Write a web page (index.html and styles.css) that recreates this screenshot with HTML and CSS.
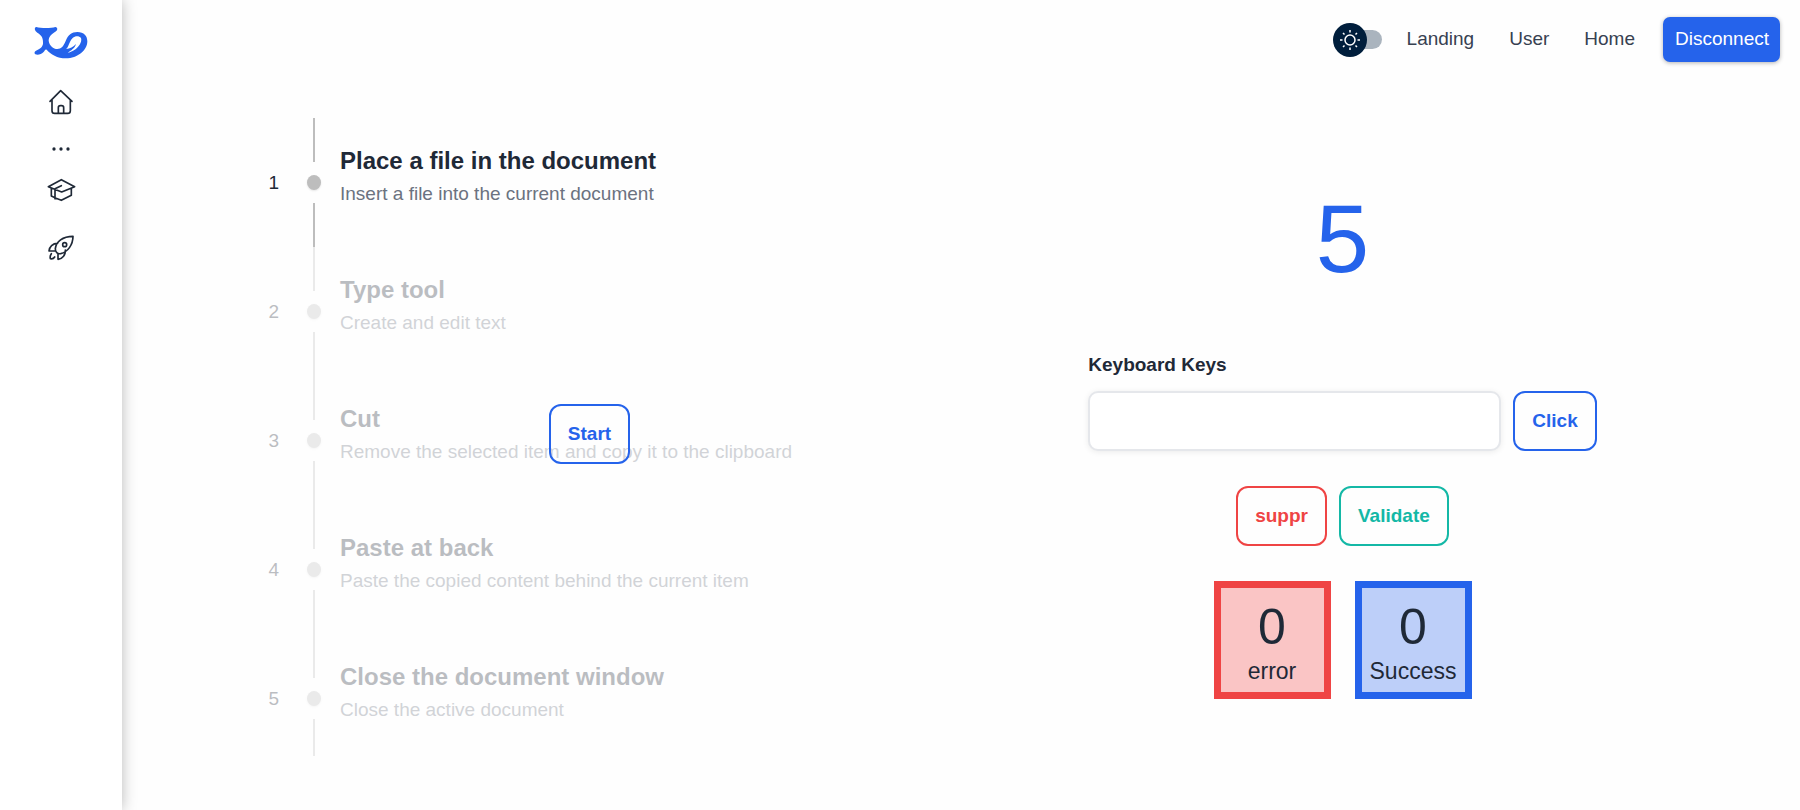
FILE: index.html
```html
<!DOCTYPE html>
<html lang="en">
<head>
<meta charset="utf-8">
<meta name="viewport" content="width=device-width, initial-scale=1">
<title>Shortcut training</title>
<link rel="stylesheet" href="styles.css">
</head>
<body>
<div class="app">
  <aside class="sidebar">
    <a class="logo" href="#" aria-label="Whale">
      <svg viewBox="102 78 162 99" width="54" height="33">
        <path fill="#2563eb" fill-rule="evenodd" d="M109 81C122 85 154 85 166 81C174 82 173 91 168 94C156 101 146 110 146 122C148 137 160 147 172 147C184 147 191 138 197 123C204 105 215 96 232 96C252 96 262 108 262 124C262 152 232 175 198 175C172 175 152 163 140 149C136 146 134 152 130 157C124 164 112 166 106 163C102 160 103 154 108 152C120 148 129 140 129 130C130 116 126 106 112 98C103 92 102 82 109 81ZM198 147C206 143 206 126 218 114C226 107 238 108 243 114C247 126 236 142 223 150C216 154 209 158 203 158C212 153 226 143 228 132C220 140 210 147 198 147Z"/>
      </svg>
    </a>
    <nav class="side-nav" aria-label="Sections">
      <a class="side-link" href="#" aria-label="Home">
        <svg class="line-icon" viewBox="144 267 78 78" width="26" height="26"><path d="M150 304L182 272L216 304M156 300V332Q156 340 164 340H203Q211 340 211 332V300M175 340V323Q175 317 181 317H185Q191 317 191 323V340"/></svg>
      </a>
      <span class="side-dots">
        <svg viewBox="0 0 57 12" width="19" height="4"><g fill="#1f2937"><circle cx="6" cy="6" r="5"/><circle cx="27" cy="6" r="5"/><circle cx="48" cy="6" r="5"/></g></svg>
      </span>
      <a class="side-link" href="#" aria-label="Learn">
        <svg class="line-icon" viewBox="139 138 87 84" width="29" height="28"><path d="M143 170L182 149L222 170L183 186ZM152 175V198L160 202M164 204L182 211L212 196V175M182 167L163 176V206"/></svg>
      </a>
      <a class="side-link" href="#" aria-label="Launch">
        <svg class="line-icon" viewBox="144 315 78 78" width="26" height="26"><path d="M219 319C219 345 203 366 182 371C172 373 166 366 166 356C168 335 188 319 219 319ZM173 340C158 340 148 350 147 363H166M174 371V388C188 386 197 374 196 360M154 371C150 377 150 382 151 386C156 387 161 386 164 381"/><circle cx="194" cy="344" r="6"/></svg>
      </a>
    </nav>
  </aside>

  <div class="page">
    <header class="topbar">
      <label class="switch">
        <input class="switch-track" type="checkbox" aria-label="Dark mode">
        <span class="switch-thumb">
          <svg viewBox="0 0 20 20" width="20" height="20" fill="none" stroke="#fff" stroke-width="1.500"><circle cx="10" cy="10" r="5"/><path d="M10 0V2.500M10 17.500V20M0 10H2.500M17.500 10H20M3 3L4.500 4.500M15.500 15.500L17 17M3 17L4.500 15.500M15.500 4.500L17 3"/></svg>
        </span>
      </label>
      <nav class="top-nav" aria-label="Main">
        <a href="#">Landing</a>
        <a href="#">User</a>
        <a href="#">Home</a>
      </nav>
      <button class="disconnect" type="button">Disconnect</button>
    </header>

    <main class="content">
      <section class="lesson">
        <ol class="steps">
          <li class="step active">
            <span class="step-number">1</span>
            <span class="rail"><i class="line"></i><i class="dot"></i><i class="line"></i></span>
            <div class="step-text"><h2>Place a file in the document</h2><p>Insert a file into the current document</p></div>
          </li>
          <li class="step">
            <span class="step-number">2</span>
            <span class="rail"><i class="line"></i><i class="dot"></i><i class="line"></i></span>
            <div class="step-text"><h2>Type tool</h2><p>Create and edit text</p></div>
          </li>
          <li class="step">
            <span class="step-number">3</span>
            <span class="rail"><i class="line"></i><i class="dot"></i><i class="line"></i></span>
            <div class="step-text"><h2>Cut</h2><p>Remove the selected item and copy it to the clipboard</p></div>
          </li>
          <li class="step">
            <span class="step-number">4</span>
            <span class="rail"><i class="line"></i><i class="dot"></i><i class="line"></i></span>
            <div class="step-text"><h2>Paste at back</h2><p>Paste the copied content behind the current item</p></div>
          </li>
          <li class="step">
            <span class="step-number">5</span>
            <span class="rail"><i class="line"></i><i class="dot"></i><i class="line"></i></span>
            <div class="step-text"><h2>Close the document window</h2><p>Close the active document</p></div>
          </li>
        </ol>
        <div class="start-overlay"><button class="btn blue" type="button">Start</button></div>
      </section>

      <section class="practice">
        <div class="countdown">5</div>
        <form class="keys">
          <label class="keys-label" for="keys">Keyboard Keys</label>
          <div class="keys-row">
            <input class="keys-input" id="keys" type="text">
            <button class="btn blue" type="button">Click</button>
          </div>
        </form>
        <div class="actions">
          <button class="btn red" type="button">suppr</button>
          <button class="btn teal" type="button">Validate</button>
        </div>
        <div class="scores">
          <div class="score error"><span class="score-value">0</span><span class="score-label">error</span></div>
          <div class="score success"><span class="score-value">0</span><span class="score-label">Success</span></div>
        </div>
      </section>
    </main>
  </div>
</div>
</body>
</html>
```
FILE: styles.css
```css
*, *::before, *::after { box-sizing: border-box; }

body {
  margin: 0;
  font-family: "Liberation Sans", Arial, sans-serif;
  font-size: 19px;
  line-height: 28px;
  color: #1f2937;
  background: #fefefe;
}

h2, p, ol { margin: 0; padding: 0; }
a { color: inherit; text-decoration: none; }
button, input { font: inherit; }
button { cursor: pointer; }
svg { display: block; }

.app { display: flex; min-height: 100vh; }

/* Sidebar */
.sidebar {
  flex: none;
  width: 122px;
  padding-top: 26px;
  display: flex;
  flex-direction: column;
  align-items: center;
  background: #fff;
  box-shadow: 0 0 14px rgba(0, 0, 0, 0.28);
}
.side-nav {
  margin-top: 23px;
  display: flex;
  flex-direction: column;
  align-items: center;
}
.side-link {
  height: 40px;
  display: flex;
  align-items: center;
}
.side-link + .side-link { margin-top: 18px; }
.side-dots {
  height: 48px;
  padding-top: 6px;
  display: flex;
  align-items: center;
}
.line-icon {
  fill: none;
  stroke: #1f2937;
  stroke-width: 5;
  stroke-linecap: round;
  stroke-linejoin: round;
}

/* Top bar */
.page { flex: 1; min-width: 0; }
.topbar {
  display: flex;
  align-items: center;
  justify-content: flex-end;
  padding: 17px 20px;
}
.switch {
  position: relative;
  display: flex;
  align-items: center;
  height: 34px;
  padding-left: 8px;
  margin-right: 25px;
}
.switch-track {
  appearance: none;
  width: 41px;
  height: 19px;
  margin: 0;
  border-radius: 10px;
  background: #aab4be;
}
.switch-thumb {
  position: absolute;
  left: 0;
  top: 0;
  width: 34px;
  height: 34px;
  border-radius: 50%;
  display: grid;
  place-items: center;
  background: #001e3c;
}
.top-nav {
  display: flex;
  gap: 35px;
  padding-bottom: 2px;
  margin-right: 28px;
  color: #374151;
}
.disconnect {
  height: 45px;
  padding: 0 11px 2px 12px;
  border: 0;
  border-radius: 7px;
  color: #fff;
  background: #2563eb;
  box-shadow: 0 1px 4px rgba(0, 0, 0, 0.3);
}

/* Two equal columns */
.content {
  display: grid;
  grid-template-columns: 1fr 1fr;
  padding: 39px 81px 40px 91px;
}

/* Steps */
.lesson { position: relative; }
.steps { list-style: none; }
.step {
  display: grid;
  grid-template-columns: 66px 14px 1fr;
  opacity: 0.3;
}
.step.active { opacity: 1; }
.step-number {
  padding-top: 51px;
  text-align: right;
}
.rail {
  margin-left: 28px;
  width: 14px;
  display: flex;
  flex-direction: column;
  align-items: center;
}
.line {
  width: 2px;
  height: 44px;
  background: #bdbdbd;
}
.step:last-child .line:last-child { height: 37px; }
.dot {
  width: 14px;
  height: 15px;
  margin: 13px 0;
  border-radius: 50%;
  background: #bdbdbd;
  box-shadow: 0 1px 2px rgba(0, 0, 0, 0.1);
}
.step-text {
  padding: 25px 0 0 47px;
}
.step-text h2 {
  font-size: 24px;
  line-height: 35px;
}
.step-text p {
  line-height: 32px;
  color: #6b7280;
}
.start-overlay {
  position: absolute;
  inset: 0 0 6px;
  display: grid;
  place-items: center;
}

/* Buttons */
.btn {
  height: 60px;
  padding: 0 17px;
  border: 2px solid currentColor;
  border-radius: 12px;
  background: transparent;
  font-weight: 700;
}
.blue { color: #2563eb; }
.red { color: #ef4444; }
.teal { color: #14b8a6; }

/* Practice */
.practice {
  display: flex;
  flex-direction: column;
  align-items: center;
  padding-top: 73px;
}
.countdown {
  font-size: 96px;
  line-height: 96px;
  color: #2563eb;
}
.keys { margin-top: 64px; }
.keys-label {
  display: block;
  margin-bottom: 12px;
  font-weight: 700;
}
.keys-row {
  display: flex;
  gap: 12px;
}
.keys-input {
  width: 413px;
  height: 60px;
  padding: 0 16px;
  border: 2px solid #e5e7eb;
  border-radius: 10px;
  background: #fff;
  box-shadow: 0 1px 6px rgba(0, 0, 0, 0.08);
}
.actions {
  display: flex;
  gap: 12px;
  margin-top: 35px;
}
.scores {
  display: flex;
  gap: 24px;
  margin-top: 35px;
}
.score {
  width: 117px;
  height: 118px;
  padding-top: 6px;
  border: 7px solid;
  display: flex;
  flex-direction: column;
  align-items: center;
  justify-content: center;
}
.score-value {
  font-size: 50px;
  line-height: 56px;
}
.score-label {
  font-size: 23px;
  line-height: 32px;
}
.error { border-color: #ef4444; background: #fac5c5; }
.success { border-color: #2563eb; background: #bdcff9; }
```
